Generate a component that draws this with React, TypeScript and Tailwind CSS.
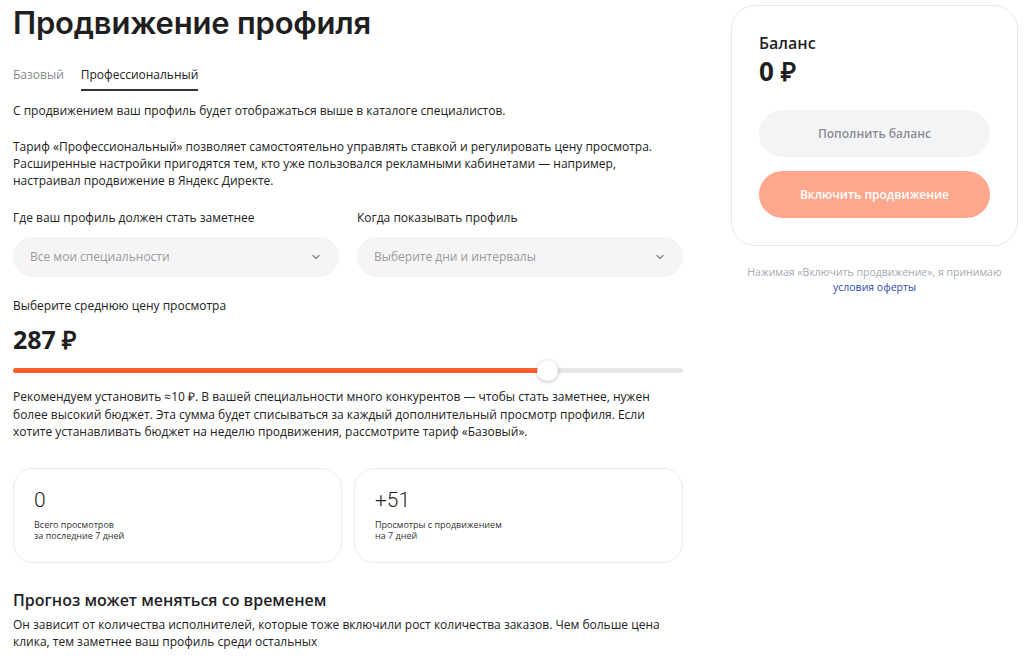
import React from "react";

const body = "font-['Open_Sans',sans-serif]";

function Chevron() {
  return (
    <svg width="12" height="12" viewBox="0 0 12 12" fill="none">
      <path d="M3 4.5L6 7.5L9 4.5" stroke="#8a8a8a" strokeWidth="1.4" strokeLinecap="round" strokeLinejoin="round" />
    </svg>
  );
}

function Select({ placeholder }: { placeholder: string }) {
  return (
    <div className="flex h-10 items-center justify-between rounded-[20px] bg-[#f5f5f6] pl-[17px] pr-[17px]">
      <span className="text-[12px] text-[#9a9a9a]">{placeholder}</span>
      <Chevron />
    </div>
  );
}

function StatCard({ value, line1, line2 }: { value: string; line1: string; line2: string }) {
  return (
    <div className="flex h-[95px] flex-col rounded-[20px] border border-[#ececec] pl-[20px] pt-[19px]">
      <div className="font-['Roboto',sans-serif] text-[21px] font-light leading-[24px] text-[#1f1f1f]">{value}</div>
      <div className="mt-[7px] text-[9px] leading-[11px] text-[#333]">
        {line1}
        <br />
        {line2}
      </div>
    </div>
  );
}

function Lines({ lines, className }: { lines: string[]; className: string }) {
  return (
    <div className={className}>
      {lines.map((l) => (
        <div key={l} className="whitespace-nowrap">
          {l}
        </div>
      ))}
    </div>
  );
}

export default function App() {
  return (
    <div className="flex min-h-[661px] w-[1024px] gap-[48px] bg-white pl-[13px] text-[#222]">
      <div className={`w-[670px] ${body}`}>
        <h1 className="mt-[5px] font-['Inter',sans-serif] text-[31px] font-semibold leading-[36px] tracking-[-0.2px] text-[#1f1f1f]">
          Продвижение профиля
        </h1>
        <div className="mt-[25px] flex gap-[17px] text-[12px]">
          <span className="text-[#8a8a8a]">Базовый</span>
          <span className="border-b-2 border-[#333] pb-[5px] text-[#222]">Профессиональный</span>
        </div>
        <p className="mt-[11px] text-[12px] leading-[17px]">
          С продвижением ваш профиль будет отображаться выше в каталоге специалистов.
        </p>
        <Lines
          className="mt-[19px] text-[12px] leading-[17px]"
          lines={[
            "Тариф «Профессиональный» позволяет самостоятельно управлять ставкой и регулировать цену просмотра.",
            "Расширенные настройки пригодятся тем, кто уже пользовался рекламными кабинетами — например,",
            "настраивал продвижение в Яндекс Директе.",
          ]}
        />
        <div className="mt-[20px] grid grid-cols-2 gap-[18px]">
          <div>
            <div className="text-[12px] leading-[17px]">Где ваш профиль должен стать заметнее</div>
            <div className="mt-[11px]">
              <Select placeholder="Все мои специальности" />
            </div>
          </div>
          <div>
            <div className="text-[12px] leading-[17px]">Когда показывать профиль</div>
            <div className="mt-[11px]">
              <Select placeholder="Выберите дни и интервалы" />
            </div>
          </div>
        </div>
        <div className="mt-[20px] text-[12px] leading-[17px]">Выберите среднюю цену просмотра</div>
        <div className="mt-[10px] text-[25px] font-bold leading-[30px] text-[#1f1f1f]">287 ₽</div>
        <div className="relative mt-[6px] h-[20px]">
          <div className="absolute left-0 right-0 top-[8px] h-[5px] rounded-full bg-[#e6e6e6]" />
          <div className="absolute left-0 top-[8px] h-[5px] w-[535px] rounded-full bg-[#fc5f2e]" />
          <div className="absolute left-[524px] top-0 h-[21px] w-[21px] rounded-full bg-white shadow-[0_1px_4px_rgba(0,0,0,0.25)]" />
        </div>
        <Lines
          className="mt-[8px] text-[12px] leading-[17.5px]"
          lines={[
            "Рекомендуем установить ≈10 ₽. В вашей специальности много конкурентов — чтобы стать заметнее, нужен",
            "более высокий бюджет. Эта сумма будет списываться за каждый дополнительный просмотр профиля. Если",
            "хотите устанавливать бюджет на неделю продвижения, рассмотрите тариф «Базовый».",
          ]}
        />
        <div className="mt-[27px] grid grid-cols-2 gap-[12px]">
          <StatCard value="0" line1="Всего просмотров" line2="за последние 7 дней" />
          <StatCard value="+51" line1="Просмотры с продвижением" line2="на 7 дней" />
        </div>
        <h2 className="mt-[26px] text-[16px] font-semibold leading-[22px] text-[#1f1f1f]">
          Прогноз может меняться со временем
        </h2>
        <Lines
          className="mt-[5px] text-[12px] leading-[17.5px]"
          lines={[
            "Он зависит от количества исполнителей, которые тоже включили рост количества заказов. Чем больше цена",
            "клика, тем заметнее ваш профиль среди остальных",
          ]}
        />
      </div>
      <div className="w-[287px] pt-[5px] font-['Open_Sans',sans-serif]">
        <div className="rounded-[24px] border border-[#e8e8e8] px-[27px] pb-[27px] pt-[27px]">
          <div className="text-[16px] font-semibold leading-[20px] text-[#1f1f1f]">Баланс</div>
          <div className="mt-[3px] text-[26px] font-bold leading-[30px] text-[#1f1f1f]">0 ₽</div>
          <div className="mt-[24px] flex h-[47px] items-center justify-center rounded-full bg-[#f3f4f6] text-[12px] font-semibold text-[#8b8d92]">
            Пополнить баланс
          </div>
          <div className="mt-[14px] flex h-[47px] items-center justify-center rounded-full bg-[#ffa78c] text-[12px] font-semibold text-white">
            Включить продвижение
          </div>
        </div>
        <div className="mt-[19px] text-center text-[10.5px] leading-[15px]">
          <div className="text-[#a5abb3]">Нажимая «Включить продвижение», я принимаю</div>
          <div className="text-[#2f4cb0]">условия оферты</div>
        </div>
      </div>
    </div>
  );
}
